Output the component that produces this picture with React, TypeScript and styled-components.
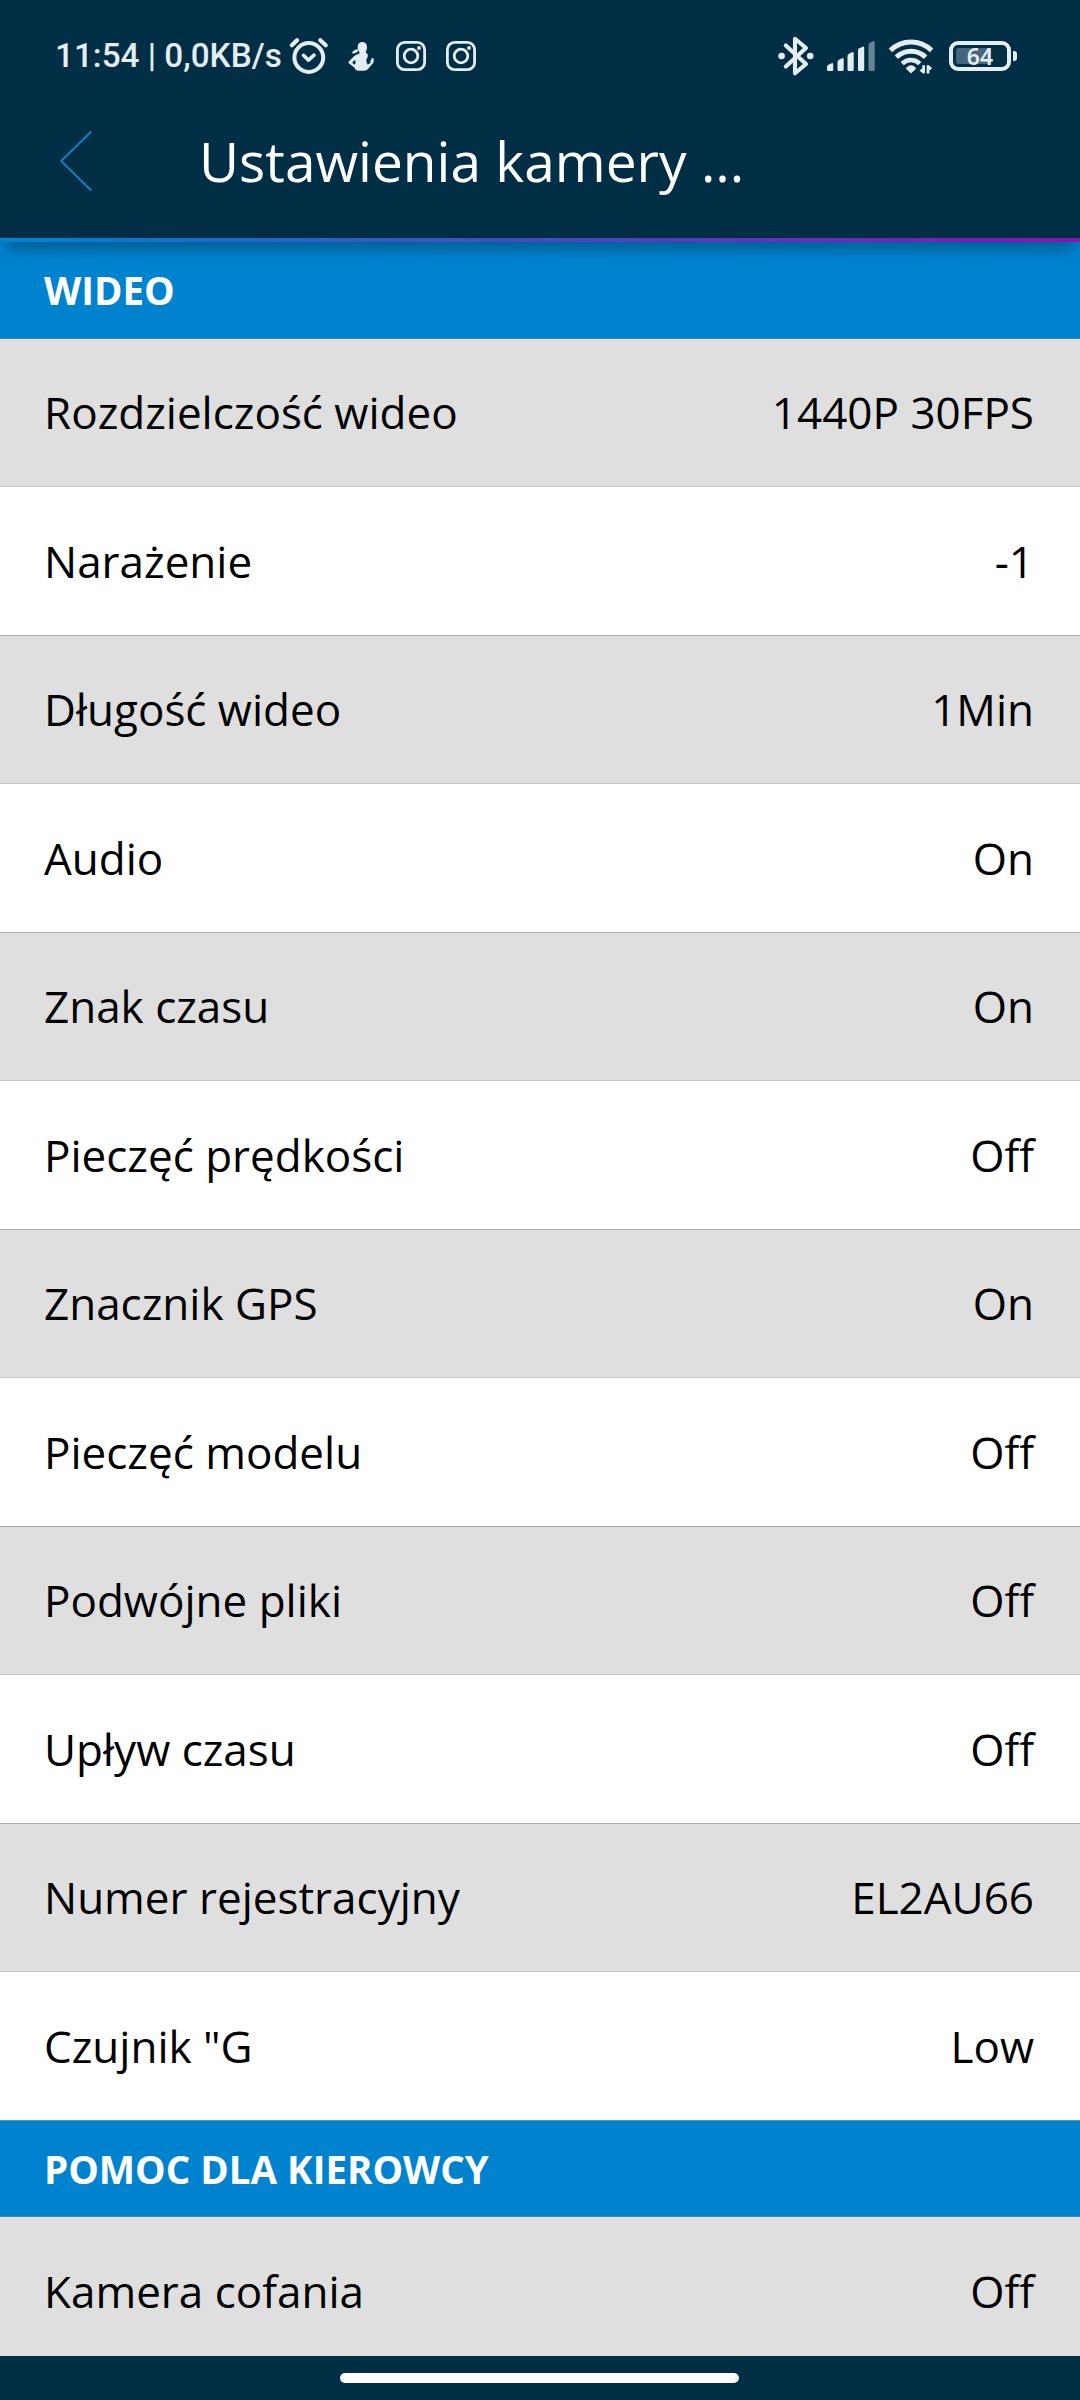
import React from "react";
import styled, { createGlobalStyle } from "styled-components";

const navy = "#002e45";
const blue = "#0083cf";
const ink = "#e4edf2";

const GlobalStyle = createGlobalStyle`
  * { box-sizing: border-box; }
  body { margin: 0; background: ${navy}; }
`;

const Screen = styled.div`
  width: 1080px;
  height: 2400px;
  display: flex;
  flex-direction: column;
  overflow: hidden;
  background: ${navy};
  font-family: "Open Sans", "Noto Sans", sans-serif;
`;

const Header = styled.header`
  position: relative;
  z-index: 1;
  flex: none;
  height: 242px;
  display: flex;
  flex-direction: column;
  background: ${navy};
  box-shadow: 0 14px 14px -6px rgba(0, 0, 0, 0.28);
`;

const StatusBar = styled.div`
  height: 84px;
  padding: 28px 69px 0 55px;
  display: flex;
  align-items: center;
  justify-content: space-between;
  color: ${ink};
`;

const StatusGroup = styled.div`
  display: flex;
  align-items: center;
`;

const Clock = styled.span`
  width: 234px;
  white-space: nowrap;
  font: 500 33.3px/40px Roboto, sans-serif;
`;

const Icon = styled.svg<{ $gap?: number }>`
  display: block;
  flex: none;
  overflow: visible;
  margin-left: ${(p) => p.$gap ?? 0}px;
`;

const Battery = styled.div`
  position: relative;
  width: 62px;
  height: 30px;
  margin-left: 15px;
  border: 4px solid ${ink};
  border-radius: 9px;
  display: flex;
  align-items: center;
  justify-content: center;
  font: 600 23px/22px "Noto Sans", sans-serif;
  &::before {
    content: "";
    position: absolute;
    left: 3px;
    top: 3px;
    width: 35px;
    height: 16px;
    border-radius: 3px;
    background: #46677a;
  }
  &::after {
    content: "";
    position: absolute;
    right: -10px;
    top: 6px;
    width: 4px;
    height: 10px;
    border-radius: 0 3px 3px 0;
    background: ${ink};
  }
`;

const BatteryLevel = styled.span`
  position: relative;
`;

const TitleBar = styled.div`
  height: 154px;
  padding-left: 60px;
  display: flex;
  align-items: center;
`;

const Title = styled.h1`
  margin: 0 0 0 106px;
  color: #fff;
  font-size: 55px;
  font-weight: 400;
  line-height: 76px;
  white-space: nowrap;
`;

const Accent = styled.div`
  height: 4px;
  background: linear-gradient(90deg, #0083ce, #8a12b2);
`;

const Content = styled.main`
  flex: none;
  height: 2114px;
  overflow: hidden;
`;

const SectionTitle = styled.h2<{ $divided?: boolean }>`
  margin: 0;
  height: 96px;
  padding-left: 44px;
  display: flex;
  align-items: center;
  border-top: ${(p) => (p.$divided ? "1px solid #4a9bc9" : "0")};
  background: ${blue};
  color: #fff;
  font-size: 38.5px;
  font-weight: 700;
`;

const Row = styled.div<{ $shaded: boolean; $first: boolean; $tall: boolean }>`
  height: ${(p) => (p.$tall ? 149 : 148)}px;
  padding: 0 46px ${(p) => (p.$shaded ? 1 : 0)}px 44px;
  display: flex;
  align-items: center;
  justify-content: space-between;
  border-top: 1px solid
    ${(p) => (p.$first ? "#4a86ac" : p.$shaded ? "#ababab" : "#c6c6c6")};
  background: ${(p) => (p.$shaded ? "#dfdfdf" : "#fff")};
  color: #000;
  font-size: 44px;
  line-height: 60px;
  white-space: nowrap;
`;

const NavBar = styled.footer`
  height: 44px;
  padding: 17px 1px 0 0;
  display: flex;
  justify-content: center;
`;

const HomePill = styled.div`
  width: 399px;
  height: 10px;
  border-radius: 5px;
  background: #fff;
`;

const AlarmIcon = () => (
  <Icon width="40" height="38" viewBox="0 0 40 38" fill="none" stroke={ink} strokeLinecap="round" strokeLinejoin="round">
    <circle cx="19.8" cy="20.5" r="14.4" strokeWidth="4" />
    <path d="M14.5 18.3l5 4.9 5.5-5" strokeWidth="3.6" />
    <path d="M2.8 8.2l5.2-5M31.3 3.2l5.4 5" strokeWidth="4.2" />
  </Icon>
);

const FitnessIcon = () => (
  <Icon $gap={19} width="26" height="29" viewBox="0 0 78 87" fill={ink}>
    <path
      fillRule="evenodd"
      d="M43 0c8 0 14 6 14 14 0 6-1 10-3 14-1 3-1 5 2 6 3 2 4 5 3 10-2 5-5 8-4 13 1 4 2 8 4 11l8-5c1-2 1-5 0-8l4-1-1-4c1-3 6-3 7 1 1 8 0 12-5 16L60 81c-3 3-7 5-12 5H33c-8 0-13-4-13-9L4 65c-3-2-3-5-1-7l17-17c5-4 9-5 14-6 1-4-1-6-3-10-1-3-2-7-2-11C29 6 35 0 43 0zM21 53l-9 9 9 6c2-5 2-10 0-15z"
    />
    <path d="M29 21c-6 1-14 6-18 12 6 3 14 1 19-6z" />
  </Icon>
);

const CameraBadgeIcon = ({ gap }: { gap: number }) => (
  <Icon $gap={gap} width="30" height="30" viewBox="0 0 30 30" fill="none" stroke={ink}>
    <rect x="1.4" y="1.4" width="27.2" height="27.2" rx="7.2" strokeWidth="2.8" />
    <circle cx="15" cy="15" r="6.8" strokeWidth="2.8" />
    <circle cx="23" cy="7" r="2" fill={ink} stroke="none" />
  </Icon>
);

const BluetoothIcon = () => (
  <Icon width="36" height="40" viewBox="0 0 36 40" fill="none" stroke={ink}>
    <path d="M7.8 9.5L28 28 17 37.3V2.7L28 12 7.8 30.5" strokeWidth="4.1" strokeLinejoin="round" strokeLinecap="round" />
    <circle cx="3.6" cy="20" r="3.3" fill={ink} stroke="none" />
    <circle cx="32.2" cy="20" r="3.3" fill={ink} stroke="none" />
  </Icon>
);

const signalBars = [
  { x: 0, top: 22 },
  { x: 10.5, top: 17 },
  { x: 20.5, top: 11 },
  { x: 31, top: 5.5 },
  { x: 41.5, top: 0 },
];

const SignalIcon = () => (
  <Icon $gap={13} width="48" height="30" viewBox="0 0 48 30" fill={ink}>
    {signalBars.map(({ x, top }, i) => (
      <path
        key={x}
        opacity={i === 4 ? 0.45 : 1}
        d={`M${x} ${top + 4}q0-1.5 1.5-2.3l3-1.5q1.7-.6 1.7 1.2V28.5q0 1.5-1.5 1.5h-3.2q-1.5 0-1.5-1.5z`}
      />
    ))}
  </Icon>
);

const WifiIcon = () => (
  <Icon $gap={13} width="46" height="35" viewBox="0 0 46 35" fill="none" stroke={ink}>
    <path d="M2.4 11.4c11.8-11.2 29.4-11.2 41.2 0" strokeWidth="4.9" strokeLinejoin="round" />
    <path d="M8.4 18.2c8.2-8 21-8 29.2 0" strokeWidth="4.9" />
    <path d="M14.2 24.6c5-4.8 12.6-4.8 17.6 0" strokeWidth="4.7" />
    <path d="M23 33l-3.7-3.7c2.2-2 5.2-2 7.4 0z" fill={ink} strokeWidth="2.4" strokeLinejoin="round" />
    <path d="M35.6 26.2v7l-3-2.6M40 34.4v-7l3.2 2.6" strokeWidth="2.8" strokeLinejoin="round" />
  </Icon>
);

const BackIcon = () => (
  <Icon width="33" height="62" viewBox="0 0 33 62" fill="none" stroke="#0d84cc" strokeWidth="1.8">
    <path d="M31.2 1.5L1.2 31l30 29.5" />
  </Icon>
);

const sections: { title: string; rows: [string, string][] }[] = [
  {
    title: "WIDEO",
    rows: [
      ["Rozdzielczość wideo", "1440P 30FPS"],
      ["Narażenie", "-1"],
      ["Długość wideo", "1Min"],
      ["Audio", "On"],
      ["Znak czasu", "On"],
      ["Pieczęć prędkości", "Off"],
      ["Znacznik GPS", "On"],
      ["Pieczęć modelu", "Off"],
      ["Podwójne pliki", "Off"],
      ["Upływ czasu", "Off"],
      ["Numer rejestracyjny", "EL2AU66"],
      ['Czujnik "G', "Low"],
    ],
  },
  { title: "POMOC DLA KIEROWCY", rows: [["Kamera cofania", "Off"]] },
];

export default function App() {
  return (
    <Screen>
      <GlobalStyle />
      <Header>
        <StatusBar>
          <StatusGroup>
            <Clock>11:54 | 0,0KB/s</Clock>
            <AlarmIcon />
            <FitnessIcon />
            <CameraBadgeIcon gap={22} />
            <CameraBadgeIcon gap={20} />
          </StatusGroup>
          <StatusGroup>
            <BluetoothIcon />
            <SignalIcon />
            <WifiIcon />
            <Battery>
              <BatteryLevel>64</BatteryLevel>
            </Battery>
          </StatusGroup>
        </StatusBar>
        <TitleBar>
          <BackIcon />
          <Title>Ustawienia kamery ...</Title>
        </TitleBar>
        <Accent />
      </Header>
      <Content>
        {sections.map((section, s) => (
          <section key={section.title}>
            <SectionTitle $divided={s > 0}>{section.title}</SectionTitle>
            {section.rows.map(([label, value], i) => (
              <Row
                key={label}
                $shaded={i % 2 === 0}
                $first={i === 0}
                $tall={i % 2 === 1 || s > 0}
              >
                <span>{label}</span>
                <span>{value}</span>
              </Row>
            ))}
          </section>
        ))}
      </Content>
      <NavBar>
        <HomePill />
      </NavBar>
    </Screen>
  );
}
